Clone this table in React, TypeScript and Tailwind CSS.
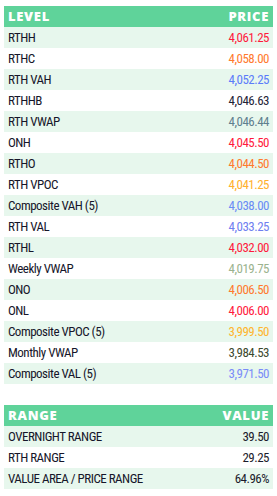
import React from "react";

type Row = { label: string; value: string; color: string };

const levels: Row[] = [
  { label: "RTHH", value: "4,061.25", color: "text-[#ff1a3c]" },
  { label: "RTHC", value: "4,058.00", color: "text-[#ff7a2e]" },
  { label: "RTH VAH", value: "4,052.25", color: "text-[#5b7cfa]" },
  { label: "RTHHB", value: "4,046.63", color: "text-[#1f2437]" },
  { label: "RTH VWAP", value: "4,046.44", color: "text-[#5f7f8f]" },
  { label: "ONH", value: "4,045.50", color: "text-[#ff1a3c]" },
  { label: "RTHO", value: "4,044.50", color: "text-[#ff7a2e]" },
  { label: "RTH VPOC", value: "4,041.25", color: "text-[#ffb02e]" },
  { label: "Composite VAH (5)", value: "4,038.00", color: "text-[#6a8cf5]" },
  { label: "RTH VAL", value: "4,033.25", color: "text-[#6f7ff0]" },
  { label: "RTHL", value: "4,032.00", color: "text-[#ff1a3c]" },
  { label: "Weekly VWAP", value: "4,019.75", color: "text-[#9bb38e]" },
  { label: "ONO", value: "4,006.50", color: "text-[#ff7a2e]" },
  { label: "ONL", value: "4,006.00", color: "text-[#ff1a3c]" },
  { label: "Composite VPOC (5)", value: "3,999.50", color: "text-[#ffb52e]" },
  { label: "Monthly VWAP", value: "3,984.53", color: "text-[#3d4a2f]" },
  { label: "Composite VAL (5)", value: "3,971.50", color: "text-[#7a8cf8]" },
];

const ranges: Row[] = [
  { label: "OVERNIGHT RANGE", value: "39.50", color: "text-[#1b1b2b]" },
  { label: "RTH RANGE", value: "29.25", color: "text-[#1b1b2b]" },
  { label: "VALUE AREA / PRICE RANGE", value: "64.96%", color: "text-[#1b1b2b]" },
];

function Table({ h1, h2, rows }: { h1: string; h2: string; rows: Row[] }) {
  return (
    <div className="flex flex-col">
      <div className="flex h-[21px] items-center justify-between bg-[#5fd39a] px-[4px] font-['Open_Sans',sans-serif] text-[13px] font-extrabold tracking-[0.7px] text-white">
        <span>{h1}</span>
        <span>{h2}</span>
      </div>
      {rows.map((r, i) => (
        <div
          key={r.label}
          className={`flex h-[21px] items-center justify-between px-[4px] font-['Roboto_Condensed',sans-serif] text-[13px] font-normal tracking-[-0.5px] ${
            i % 2 === 0 ? "bg-[#e7f7ed]" : "bg-white"
          }`}
        >
          <span className="text-[#16162a]">{r.label}</span>
          <span className={r.color}>{r.value}</span>
        </div>
      ))}
    </div>
  );
}

export default function App() {
  return (
    <div className="flex w-[277px] flex-col gap-[21px] bg-white px-[4px] pt-[6px]">
      <Table h1="LEVEL" h2="PRICE" rows={levels} />
      <Table h1="RANGE" h2="VALUE" rows={ranges} />
    </div>
  );
}
